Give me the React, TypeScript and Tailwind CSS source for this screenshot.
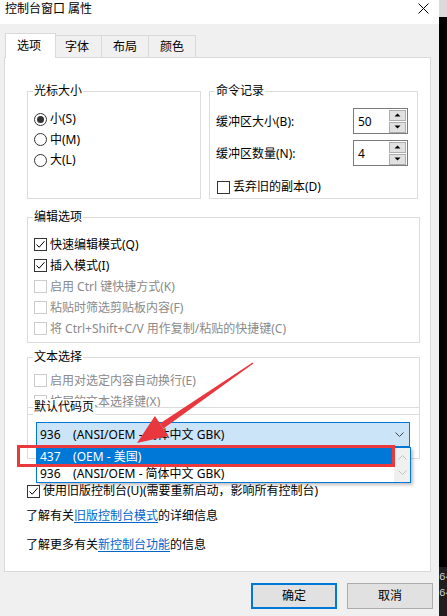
import React from "react";

function Check({ checked = false, disabled = false }: { checked?: boolean; disabled?: boolean }) {
  return (
    <span
      className={
        "flex h-[13px] w-[13px] shrink-0 items-center justify-center border bg-white " +
        (disabled ? "border-[#cccccc]" : "border-[#333333]")
      }
    >
      {checked && (
        <svg width="11" height="11" viewBox="0 0 11 11">
          <path d="M1.5 5.5 L4.2 8.2 L9.5 2.2" fill="none" stroke="#000" strokeWidth="1" />
        </svg>
      )}
    </span>
  );
}

function Radio({ checked = false }: { checked?: boolean }) {
  return (
    <span className="flex h-[13px] w-[13px] shrink-0 items-center justify-center rounded-full border border-[#333333] bg-white">
      {checked && <span className="h-[7px] w-[7px] rounded-full bg-[#333333]" />}
    </span>
  );
}

function Group({
  label,
  className,
  children,
}: {
  label: string;
  className: string;
  children?: React.ReactNode;
}) {
  return (
    <div className={"relative border border-[#dcdcdc] " + className}>
      <span className="absolute -top-[9px] left-[5px] z-10 bg-white px-[1px] leading-[16px]">{label}</span>
      {children}
    </div>
  );
}

function Spin({ value }: { value: string }) {
  return (
    <div className="flex h-[26px] w-[55px] border border-[#7a7a7a] bg-white">
      <div className="flex flex-1 items-center pl-[4px] pt-[1px]">{value}</div>
      <div className="flex w-[18px] flex-col justify-center gap-[1px] pr-[1px]">
        <div className="flex h-[11px] items-center justify-center border border-[#adadad] bg-[#e1e1e1]">
          <svg width="7" height="4" viewBox="0 0 7 4">
            <path d="M0.5 3.5 L3.5 0.5 L6.5 3.5 Z" fill="#000" />
          </svg>
        </div>
        <div className="flex h-[11px] items-center justify-center border border-[#adadad] bg-[#e1e1e1]">
          <svg width="7" height="4" viewBox="0 0 7 4">
            <path d="M0.5 0.5 L3.5 3.5 L6.5 0.5 Z" fill="#000" />
          </svg>
        </div>
      </div>
    </div>
  );
}

function CheckRow({ label, checked, disabled }: { label: string; checked?: boolean; disabled?: boolean }) {
  return (
    <div className="flex h-[21px] items-center gap-[3px]">
      <Check checked={checked} disabled={disabled} />
      <span className={"whitespace-pre " + (disabled ? "text-[#8a8a8a]" : "text-black")}>{label}</span>
    </div>
  );
}

function Chevron({ up = false, color }: { up?: boolean; color: string }) {
  return (
    <svg width="9" height="5" viewBox="0 0 9 5">
      <path d={up ? "M0.5 4.5 L4.5 0.5 L8.5 4.5" : "M0.5 0.5 L4.5 4.5 L8.5 0.5"} fill="none" stroke={color} strokeWidth="1" />
    </svg>
  );
}

export default function App() {
  return (
    <div className="relative flex h-[616px] w-[447px] overflow-hidden font-['Noto_Sans','Noto_Sans_CJK_SC',sans-serif] text-[12px] leading-[16px] text-black">
      {/* dialog */}
      <div className="flex h-full w-[439px] flex-col bg-[#f0f0f0]">
        {/* title bar */}
        <div className="flex h-[24px] items-start justify-between bg-white pl-[5px] pr-[10px] pt-[1px]">
          <span className="text-[12px]">控制台窗口 属性</span>
          <svg width="11" height="11" viewBox="0 0 11 11" className="mt-[2px]">
            <path d="M0.5 0.5 L10.5 10.5 M10.5 0.5 L0.5 10.5" stroke="#000" strokeWidth="1" />
          </svg>
        </div>
        {/* tabs */}
        <div className="flex h-[33px] items-end pl-[5px]">
          <div className="relative z-10 -mb-[1px] flex h-[25px] w-[51px] items-center justify-center border border-b-0 border-[#d9d9d9] bg-white pr-[3px]">
            选项
          </div>
          <div className="flex h-[22px] w-[46px] items-center justify-center border border-b-0 border-l-0 border-[#d9d9d9] bg-[#f0f0f0] pr-[3px] pt-[1px]">
            字体
          </div>
          <div className="flex h-[22px] w-[47px] items-center justify-center border border-b-0 border-l-0 border-[#d9d9d9] bg-[#f0f0f0] pt-[1px]">
            布局
          </div>
          <div className="flex h-[22px] w-[47px] items-center justify-center border border-b-0 border-l-0 border-[#d9d9d9] bg-[#f0f0f0] pt-[1px]">
            颜色
          </div>
        </div>
        {/* panel */}
        <div className="ml-[4px] flex h-[515px] w-[427px] flex-col border border-[#d9d9d9] bg-white pl-[22px] pt-[33px]">
          <div className="flex gap-[8px]">
            <Group label="光标大小" className="h-[108px] w-[174px] pl-[6px] pt-[17px]">
              <div className="flex h-[20px] items-center gap-[3px]">
                <Radio checked />
                <span>小(S)</span>
              </div>
              <div className="flex h-[21px] items-center gap-[3px]">
                <Radio />
                <span>中(M)</span>
              </div>
              <div className="flex h-[20px] items-center gap-[3px]">
                <Radio />
                <span>大(L)</span>
              </div>
            </Group>
            <Group label="命令记录" className="h-[108px] w-[209px] pl-[6px] pr-[9px] pt-[16px]">
              <div className="flex h-[26px] items-center justify-between">
                <span className="pt-[1px]">缓冲区大小(B):</span>
                <Spin value="50" />
              </div>
              <div className="mt-[6px] flex h-[26px] items-center justify-between">
                <span className="pt-[1px]">缓冲区数量(N):</span>
                <Spin value="4" />
              </div>
              <div className="mt-[13px] flex h-[16px] items-center gap-[3px] pl-[1px]">
                <Check />
                <span>丢弃旧的副本(D)</span>
              </div>
            </Group>
          </div>

          <Group label="编辑选项" className="mt-[18px] h-[126px] w-[393px] pl-[6px] pt-[16px]">
            <CheckRow label="快速编辑模式(Q)" checked />
            <CheckRow label="插入模式(I)" checked />
            <CheckRow label="启用 Ctrl 键快捷方式(K)" disabled />
            <CheckRow label="粘贴时筛选剪贴板内容(F)" disabled />
            <CheckRow label="将 Ctrl+Shift+C/V 用作复制/粘贴的快捷键(C)" disabled />
          </Group>

          <Group label="文本选择" className="mt-[14px] h-[58px] w-[393px] pl-[6px] pt-[12px]">
            <CheckRow label="启用对选定内容自动换行(E)" disabled />
            <CheckRow label="扩展的文本选择键(X)" disabled />
          </Group>

          <Group label="默认代码页" className="-mt-[8px] h-[52px] w-[393px] pl-[8px] pt-[14px]">
            <div className="flex h-[25px] w-[374px] items-center justify-between border border-[#0078d7] bg-[#cce4f7] pl-[3px] pr-[5px]">
              <span className="whitespace-pre">936    (ANSI/OEM - 简体中文 GBK)</span>
              <Chevron color="#444444" />
            </div>
            {/* open dropdown list */}
            <div className="absolute left-[8px] top-[39px] z-20 flex h-[36px] w-[375px] border border-[#0078d7] bg-white shadow-[2px_2px_3px_rgba(0,0,0,0.25)]">
              <div className="flex flex-1 flex-col">
                <div className="flex h-[17px] items-center bg-[#0078d7] pl-[3px] text-white">
                  <span className="whitespace-pre">437    (OEM - 美国)</span>
                </div>
                <div className="flex h-[17px] items-center pl-[3px]">
                  <span className="whitespace-pre">936    (ANSI/OEM - 简体中文 GBK)</span>
                </div>
              </div>
              <div className="flex w-[16px] flex-col items-center justify-around bg-[#f0f0f0] py-[2px]">
                <Chevron up color="#c2c2c2" />
                <Chevron color="#c2c2c2" />
              </div>
            </div>
            {/* red highlight box */}
            <div className="absolute -left-[11px] top-[37px] z-30 h-[22px] w-[378px] border-[3px] border-[#ea3a3e]" />
          </Group>

          <div className="mt-[24px] flex h-[16px] items-center gap-[3px]">
            <Check checked />
            <span>使用旧版控制台(U)(需要重新启动，影响所有控制台)</span>
          </div>
          <div className="mt-[9px] -ml-[1px] h-[16px]">
            了解有关<span className="text-[#0066cc] underline underline-offset-[2px]">旧版控制台模式</span>的详细信息
          </div>
          <div className="mt-[13px] -ml-[1px] h-[16px]">
            了解更多有关<span className="text-[#0066cc] underline underline-offset-[2px]">新控制台功能</span>的信息
          </div>
        </div>
        {/* buttons */}
        <div className="mt-[11px] flex gap-[10px] pl-[251px]">
          <div className="flex h-[26px] w-[86px] items-center justify-center border-2 border-[#0078d7] bg-[#e1e1e1]">确定</div>
          <div className="flex h-[26px] w-[86px] items-center justify-center border border-[#adadad] bg-[#e1e1e1]">取消</div>
        </div>
      </div>

      {/* background strip at right */}
      <div className="flex h-full w-[8px] flex-col">
        <div className="h-[17px] bg-[#dadada]" />
        <div className="flex-1 bg-black" />
        <div className="flex h-[49px] flex-col overflow-hidden bg-[#1e1e1e] pt-[2px] font-['Liberation_Mono',monospace] text-[11px] leading-[16px] text-[#cccccc]">
          <span className="whitespace-nowrap">64</span>
          <span className="whitespace-nowrap">64</span>
        </div>
      </div>

      {/* red arrow annotation */}
      <svg className="pointer-events-none absolute left-0 top-0 z-40" width="447" height="616" viewBox="0 0 447 616">
        <polygon points="253.4,363.5 252.6,362.5 159.9,423.6 163.5,428.4" fill="#e8383d" />
        <polygon points="137,443 154.9,416.1 168.5,435.9" fill="#e8383d" />
      </svg>
    </div>
  );
}
